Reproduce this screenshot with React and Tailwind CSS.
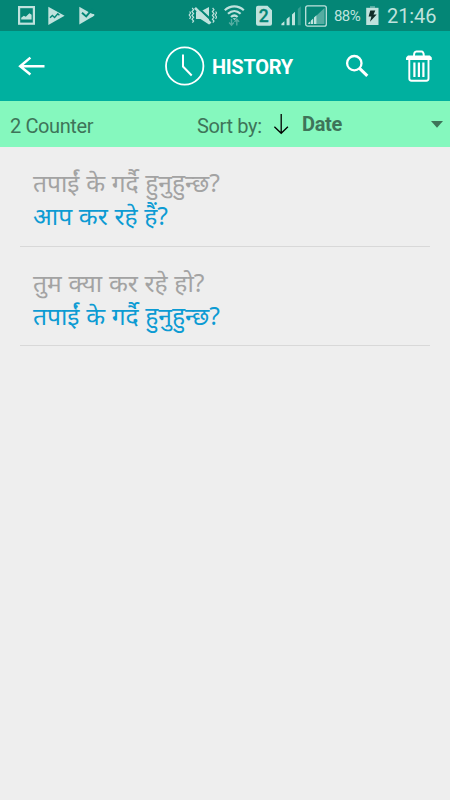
// ─────────────────────────────────────────────────────────────────────────────
//  History  |  Translation history screen
//  item fields: id, source, result
// ─────────────────────────────────────────────────────────────────────────────

const ITEMS = [
  { id: 1, source: 'तपाईं के गर्दै हुनुहुन्छ?', result: 'आप कर रहे हैं?' },
  { id: 2, source: 'तुम क्या कर रहे हो?', result: 'तपाईं के गर्दै हुनुहुन्छ?' },
];

function StatusBar() {
  return (
    <div className="flex h-[31px] shrink-0 items-center bg-[#048676] pl-[18px] pr-[13px] text-[#bfe2dd]">
      {/* Screenshot */}
      <svg className="h-[31px] w-[17px]" viewBox="0 0 17 31">
        <rect x="1.1" y="7.1" width="14.8" height="16.6" fill="none" stroke="currentColor" strokeWidth="2.2" />
        <path d="M3.2 19.5v-1.8l2.6-2 2 1 3.6-3.4 2.2 1.5v4.7z" fill="currentColor" />
      </svg>
      {/* Play notifications */}
      <svg className="ml-[13px] h-[31px] w-[17px]" viewBox="0 0 17 31">
        <path d="M.3 6.8 16.6 15.8.3 24.9z" fill="currentColor" />
        <path d="M2 17.8 4.4 15.4l2.2 2 3.2-3.6 1.6 1.4" fill="none" stroke="#048676" strokeWidth="1.4" />
      </svg>
      <svg className="ml-[14px] h-[31px] w-[17px]" viewBox="0 0 17 31">
        <path d="M.3 6.8 15.6 15.6.3 24.6z" fill="currentColor" />
        <path d="m3 12.8 4.2 3.6 6.2-7.2" fill="none" stroke="#048676" strokeWidth="2" />
        <path d="m11.4 13.6 4.200.6-3 3z" fill="currentColor" />
      </svg>

      {/* Vibrate / muted */}
      <svg className="ml-auto h-[31px] w-[29px]" viewBox="0 0 29 31">
        <path d="M8 11.500h4.500L21 7v17.500l-8.500-5.500H8z" fill="currentColor" />
        <path d="m8.500 6.200 15 14" stroke="#048676" strokeWidth="2.200" />
        <path d="M7 7.800 22.500 23.500" stroke="currentColor" strokeWidth="2.600" />
        <path d="m4.200 8 1.400 1.700-1.600 1.900 1.600 1.900-1.600 1.900 1.600 1.900-1.600 1.900 1.600 1.900-1.200 1.600M1.600 11.500 2.600 13l-1.400 2 1.400 2-1 2M24.600 8l1.400 1.700-1.600 1.900 1.600 1.900-1.600 1.900 1.600 1.900-1.600 1.900 1.600 1.900-1.200 1.600M27.600 11.500l1 1.500-1.400 2 1.400 2-1 2" fill="none" stroke="currentColor" strokeWidth="1.200" />
      </svg>
      {/* Wifi */}
      <svg className="ml-[7px] h-[31px] w-[22px]" viewBox="0 0 22 31">
        <path d="M.8 10.200c5.600-5.200 13.400-5.200 19 0M4 13.700c3.800-3.500 8.800-3.500 12.600 0M7 17c2-1.800 4.600-1.800 6.600 0" fill="none" stroke="currentColor" strokeWidth="2.200" />
        <path d="M8.600 18.200h3.600l-1.800 1.900z" fill="currentColor" />
        <path d="M7.500 19v6.200m-2.400-2.700 2.400 2.700 2.400-2.700M12.800 25.500V19m-2.300 2.900 2.300-2.700 2.300 2.700" fill="none" stroke="#55aca1" strokeWidth="1.400" />
      </svg>
      {/* Active SIM */}
      <svg className="ml-[10px] h-[31px] w-[16px]" viewBox="0 0 16 31">
        <path d="M2 5.800h9.500L16 10.300v13.500a2 2 0 0 1-2 2H2a2 2 0 0 1-2-2v-16a2 2 0 0 1 2-2z" fill="currentColor" />
        <text x="7.800" y="22" textAnchor="middle" fontSize="17.500" fontWeight="500" stroke="#048676" strokeWidth=".3" fill="#048676">2</text>
      </svg>
      {/* Signal */}
      <svg className="ml-[9px] h-[31px] w-[21px]" viewBox="0 0 21 31">
        <path d="M.4 25.200v-1.400l3-2.600v4zM5.600 25.200v-6.100l3-2.600v8.700zM11 25.200V14.400l3-2.600v13.400z" fill="currentColor" />
        <path d="M16.800 25.200V9l3-2.800v19z" fill="#359e91" />
      </svg>
      <svg className="ml-[3px] h-[31px] w-[22px]" viewBox="0 0 22 31">
        <rect x=".700" y="5.800" width="20.600" height="20.400" rx="2" fill="none" stroke="currentColor" strokeWidth="1.300" />
        <path d="M11 16 19.500 8v16H11z" fill="#55aca1" />
        <path d="M3.200 24v-1l2.200-1.700V24zM6 24v-3.500l2.200-2V24zM9 24v-6.500l2.400-2.200V24z" fill="currentColor" />
      </svg>
      <span className="ml-[7px] w-[32px] pt-px text-[15px] tracking-[-0.6px]">88%</span>
      {/* Battery */}
      <svg className="h-[31px] w-[13px]" viewBox="0 0 13 31">
        <path d="M4 6h5v2H4z" fill="#55aca1" />
        <rect x=".200" y="7.800" width="12.300" height="17.200" fill="currentColor" />
        <path d="M4.300 10.500h5l-1.800 4h3.200L4 21.800l1.400-5.400H2.600z" fill="#102d29" />
      </svg>
      <span className="ml-[8px] w-[50px] pt-px text-[20px] leading-[31px] tracking-[-0.1px] whitespace-nowrap">21:46</span>
    </div>
  );
}

function AppBar() {
  return (
    <header className="flex h-[70px] shrink-0 items-center bg-[#00b09f] pr-[17px] pl-[18px] text-white">
      <button aria-label="Back">
        <svg className="h-[20px] w-[28px]" viewBox="0 0 28 20" fill="none" stroke="currentColor" strokeWidth="2.5">
          <path d="M26.500 10.300H2M12.400 1.600 2.200 10.300l10.200 8.200" />
        </svg>
      </button>

      <div className="ml-[119px] flex items-center">
        <svg className="h-10 w-10" viewBox="0 0 40 40" fill="none" stroke="currentColor">
          <circle cx="19.700" cy="20" r="18.700" strokeWidth="1.800" />
          <path d="M18 8.500v12l8.700 9" strokeWidth="2" />
        </svg>
        <h1 className="ml-[7px] w-[82px] pt-px text-[20px] font-bold tracking-[-0.3px] whitespace-nowrap">HISTORY</h1>
      </div>

      <button aria-label="Search" className="ml-[51px]">
        <svg className="h-6 w-6" viewBox="0 0 24 24" fill="none" stroke="currentColor">
          <circle cx="9.300" cy="9.200" r="7.200" strokeWidth="2.300" />
          <path d="m14.300 14.200 8 7.600" strokeWidth="3.100" />
        </svg>
      </button>
      <button aria-label="Delete all" className="ml-auto">
        <svg className="h-8 w-[27px]" viewBox="0 0 27 32" fill="none" stroke="currentColor">
          <path d="M8 6c0-3.300.8-4.500 2.400-4.500h5c1.600 0 2.400 1.200 2.400 4.500" strokeWidth="2" />
          <path d="M0 10V7.600l2-2h21.800l2 2V10z" fill="currentColor" stroke="none" />
          <path d="M3.300 10v18.600c0 1.400.8 2.200 2.200 2.200h14.800c1.400 0 2.200-.8 2.200-2.200V10" strokeWidth="1.900" />
          <path d="M8.400 12.500V27M12.900 12.500V27M17.400 12.500V27" strokeWidth="2.200" />
        </svg>
      </button>
    </header>
  );
}

function SortBar({ count }) {
  return (
    <div className="flex h-[46px] shrink-0 items-center bg-[#85f8be] pr-[7px] pl-[10px] text-[20px] text-[#3e7459]">
      <span className="w-[187px] pt-[3px] tracking-[-0.4px] whitespace-nowrap">{count} Counter</span>
      <span className="w-[76px] pt-[3px] tracking-[-0.35px] whitespace-nowrap">Sort by:</span>
      <svg className="h-[22px] w-4" viewBox="0 0 16 22" fill="none" stroke="#000" strokeWidth="1.3">
        <path d="M8.200 1v19.500M1.400 13.800l6.800 6.500 6.700-6.500" />
      </svg>
      <button className="ml-[13px] flex flex-1 items-center justify-between font-bold tracking-[-0.3px]">
        <span className="-mt-px">Date</span>
        <svg className="h-[7px] w-3" viewBox="0 0 12 7">
          <path d="M0 0h12L6 6.700z" fill="#3e7459" />
        </svg>
      </button>
    </div>
  );
}

function HistoryItem({ item }) {
  return (
    <li className="h-[99.5px] border-b border-[#d8d8d8] pt-[19px] pl-[13px] font-['Noto_Sans','Noto_Sans_Devanagari',sans-serif] text-[24.6px] leading-[33.4px] [word-spacing:0.3px] whitespace-nowrap">
      <p className="text-[#a3a3a3]">{item.source}</p>
      <p className="text-[#0c9bd3]">{item.result}</p>
    </li>
  );
}

export default function App() {
  return (
    <div className="flex h-screen w-full flex-col overflow-hidden bg-[#eeeeee] font-['Roboto',sans-serif]">
      <StatusBar />
      <AppBar />
      <SortBar count={ITEMS.length} />
      <ul className="mx-5">
        {ITEMS.map(item => (
          <HistoryItem key={item.id} item={item} />
        ))}
      </ul>
    </div>
  );
}
